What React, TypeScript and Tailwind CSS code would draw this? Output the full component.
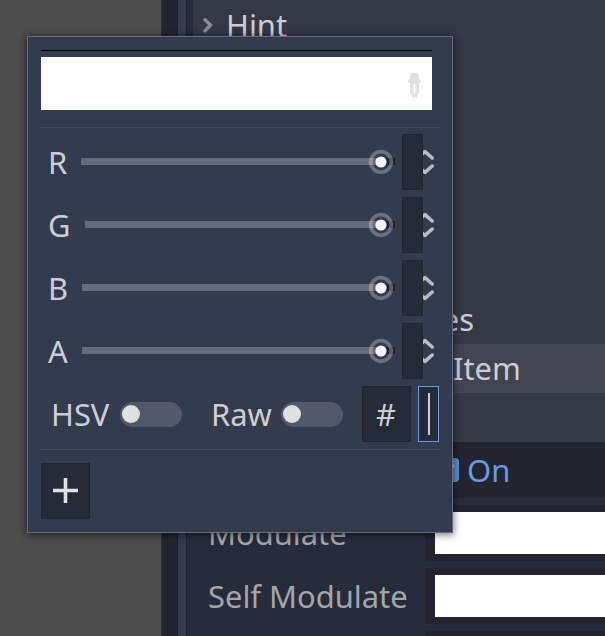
import React from "react";

function SpinArrows() {
  return (
    <svg width="12" height="26" viewBox="0 0 12 26" fill="none" stroke="#b9bcc1" strokeWidth="3.5" strokeLinecap="round" strokeLinejoin="round">
      <path d="M-3 6.8 L2 2.6 L9.2 9" />
      <path d="M-3 19.2 L2 23.4 L9.2 17" />
    </svg>
  );
}

function Grabber() {
  return (
    <svg className="absolute top-[-9px] right-[1px]" width="26" height="26" viewBox="0 0 26 26">
      <circle cx="13" cy="13" r="10.3" fill="none" stroke="#fff" strokeOpacity="0.28" strokeWidth="3.7" />
      <circle cx="13" cy="13" r="5.6" fill="#f3f3f4" />
    </svg>
  );
}

function Channel({ name, labelClass }: { name: string; labelClass: string }) {
  return (
    <div className="flex h-14 items-start">
      <span className={"shrink-0 pt-[7px] pl-[7px] " + labelClass}>{name}</span>
      <div className="relative mt-6 flex h-[7px] grow">
        <div className="grow bg-[#676c7b]" />
        <div className="w-[14px] bg-[#1f232e]" />
        <Grabber />
      </div>
      <div className="ml-[7px] h-14 w-[21px] shrink-0 border border-[#21252f] bg-[#262b3a]" />
      <div className="w-[17px] shrink-0 pt-[15px]">
        <SpinArrows />
      </div>
    </div>
  );
}

function Toggle() {
  return (
    <div className="flex h-[25px] w-[62.5px] shrink-0 items-center rounded-full bg-[#535968] pl-[2.5px]">
      <div className="h-[18px] w-[18px] rounded-full bg-[#e0e0e0]" />
    </div>
  );
}

function Picker() {
  return (
    <div className="absolute top-[36px] left-[27px] h-[497px] w-[426px] border border-[#666b79] bg-[#333b4f] pt-[13px] pr-[12px] pl-[13px] shadow-[0_1px_7px_1px_rgba(0,0,0,0.5)]">
      <div className="h-px w-[391px] bg-black" />
      <div className="mt-[6px] flex h-[53px] w-[391px] items-start justify-end bg-white pt-[15px] pr-[11px]">
        <svg width="13" height="26" viewBox="0 0 13 26">
          <path d="M2 10H11V20.5L9 23V25.5H4V23L2 20.5Z" fill="#e0e0e0" />
          <path d="M4.5 11.5H8.5V21L8 22H5L4.5 21Z" fill="#ededed" />
          <path d="M5.9 11.5H7.2V21.5H5.9Z" fill="#fff" />
          <path d="M2 7.5V5Q2 0.8 6.5 0.8T11 5V7.5H13V11H11V12H2V11H0V7.5Z" fill="#e0e0e0" />
        </svg>
      </div>
      <div className="mt-[17px] -ml-px h-px w-[400px] bg-[#434a5d]" />
      <div className="mt-[6px] flex flex-col gap-[7px]">
        <Channel name="R" labelClass="w-[40px]" />
        <Channel name="G" labelClass="w-[44px]" />
        <Channel name="B" labelClass="w-[41px]" />
        <Channel name="A" labelClass="w-[41px]" />
        <div className="flex h-14 items-center">
          <span className="w-[78.5px] shrink-0 pl-[10px]">HSV</span>
          <Toggle />
          <span className="ml-[29px] w-[69.5px] shrink-0">Raw</span>
          <Toggle />
          <div className="ml-[19px] flex h-14 w-[49px] shrink-0 items-center justify-center border border-[#21252f] bg-[#262b3a] pr-px">#</div>
          <div className="ml-[7px] flex h-14 w-[21px] shrink-0 items-center border border-[#699ce8] bg-[#262b3a] pl-[9px]">
            <div className="h-[42px] w-[2px] bg-[#cfd0d4]" />
          </div>
        </div>
      </div>
      <div className="mt-[7px] -ml-px h-px w-[400px] bg-[#434a5d]" />
      <div className="mt-[13px] flex h-14 w-[49px] items-center justify-center border border-[#21252f] bg-[#262b3a] pb-px">
        <svg width="25" height="25" viewBox="0 0 25 25" stroke="#e0e0e0" strokeWidth="3.6">
          <path d="M12.5 0V25M0 12.5H25" />
        </svg>
      </div>
    </div>
  );
}

function ColorRow({ name }: { name: string }) {
  return (
    <div className="flex h-14 shrink-0 items-center">
      <span className="w-[238px] shrink-0 pl-[21px] text-[#a4a5a8]">{name}</span>
      <div className="h-14 grow bg-[#222530] py-[7px] pl-[10px]">
        <div className="h-[42px] bg-white" />
      </div>
    </div>
  );
}

export default function App() {
  return (
    <div className="relative flex h-[636px] w-[605px] overflow-hidden bg-[#4d4d4d] font-['Noto_Sans',sans-serif] text-[30.9px] leading-[42px] whitespace-nowrap text-[#cdced2]">
      <div className="w-[161px] shrink-0" />
      <div className="w-[17px] shrink-0 border-x border-l-[#2b303b] border-r-[#1d212b] bg-[#222530]" />
      <div className="w-2 shrink-0 bg-[#333b4f]" />
      <div className="flex grow flex-col border-l border-[#1e222d] bg-[#262c3b]">
        <div className="ml-[6px] flex h-[442px] shrink-0 flex-col bg-[#343946]">
          <div className="flex h-[50px] items-center pl-[9px]">
            <svg width="12" height="16" viewBox="0 0 12 16" fill="none" stroke="#888b93" strokeWidth="3.4" strokeLinecap="round">
              <path d="M3 2.7L8.5 8L3 13.8" />
            </svg>
            <span className="ml-[12px]">Hint</span>
          </div>
          <div className="mt-[245px] flex h-[49px] items-start justify-end pt-[3px] pr-[131px]">es</div>
          <div className="flex h-[49px] items-start bg-[#414552] pt-[3px] pl-[260px]">Item</div>
        </div>
        <div className="flex h-14 shrink-0 items-center bg-[#222530] pl-[248px] text-[#699ce8]">
          <svg width="24" height="24" viewBox="0 0 24 24">
            <rect width="24" height="24" rx="4" fill="#5f8dd3" />
            <path d="M8 16L12 18L17.5 8" fill="none" stroke="#e0e0e0" strokeWidth="3" strokeLinecap="round" />
          </svg>
          <span className="ml-[8px]">On</span>
        </div>
        <div className="mt-[7px] flex flex-col gap-[7px]">
          <ColorRow name="Modulate" />
          <ColorRow name="Self Modulate" />
          <div className="ml-[238px] h-[5px] bg-[#222530]" />
        </div>
      </div>
      <Picker />
    </div>
  );
}
